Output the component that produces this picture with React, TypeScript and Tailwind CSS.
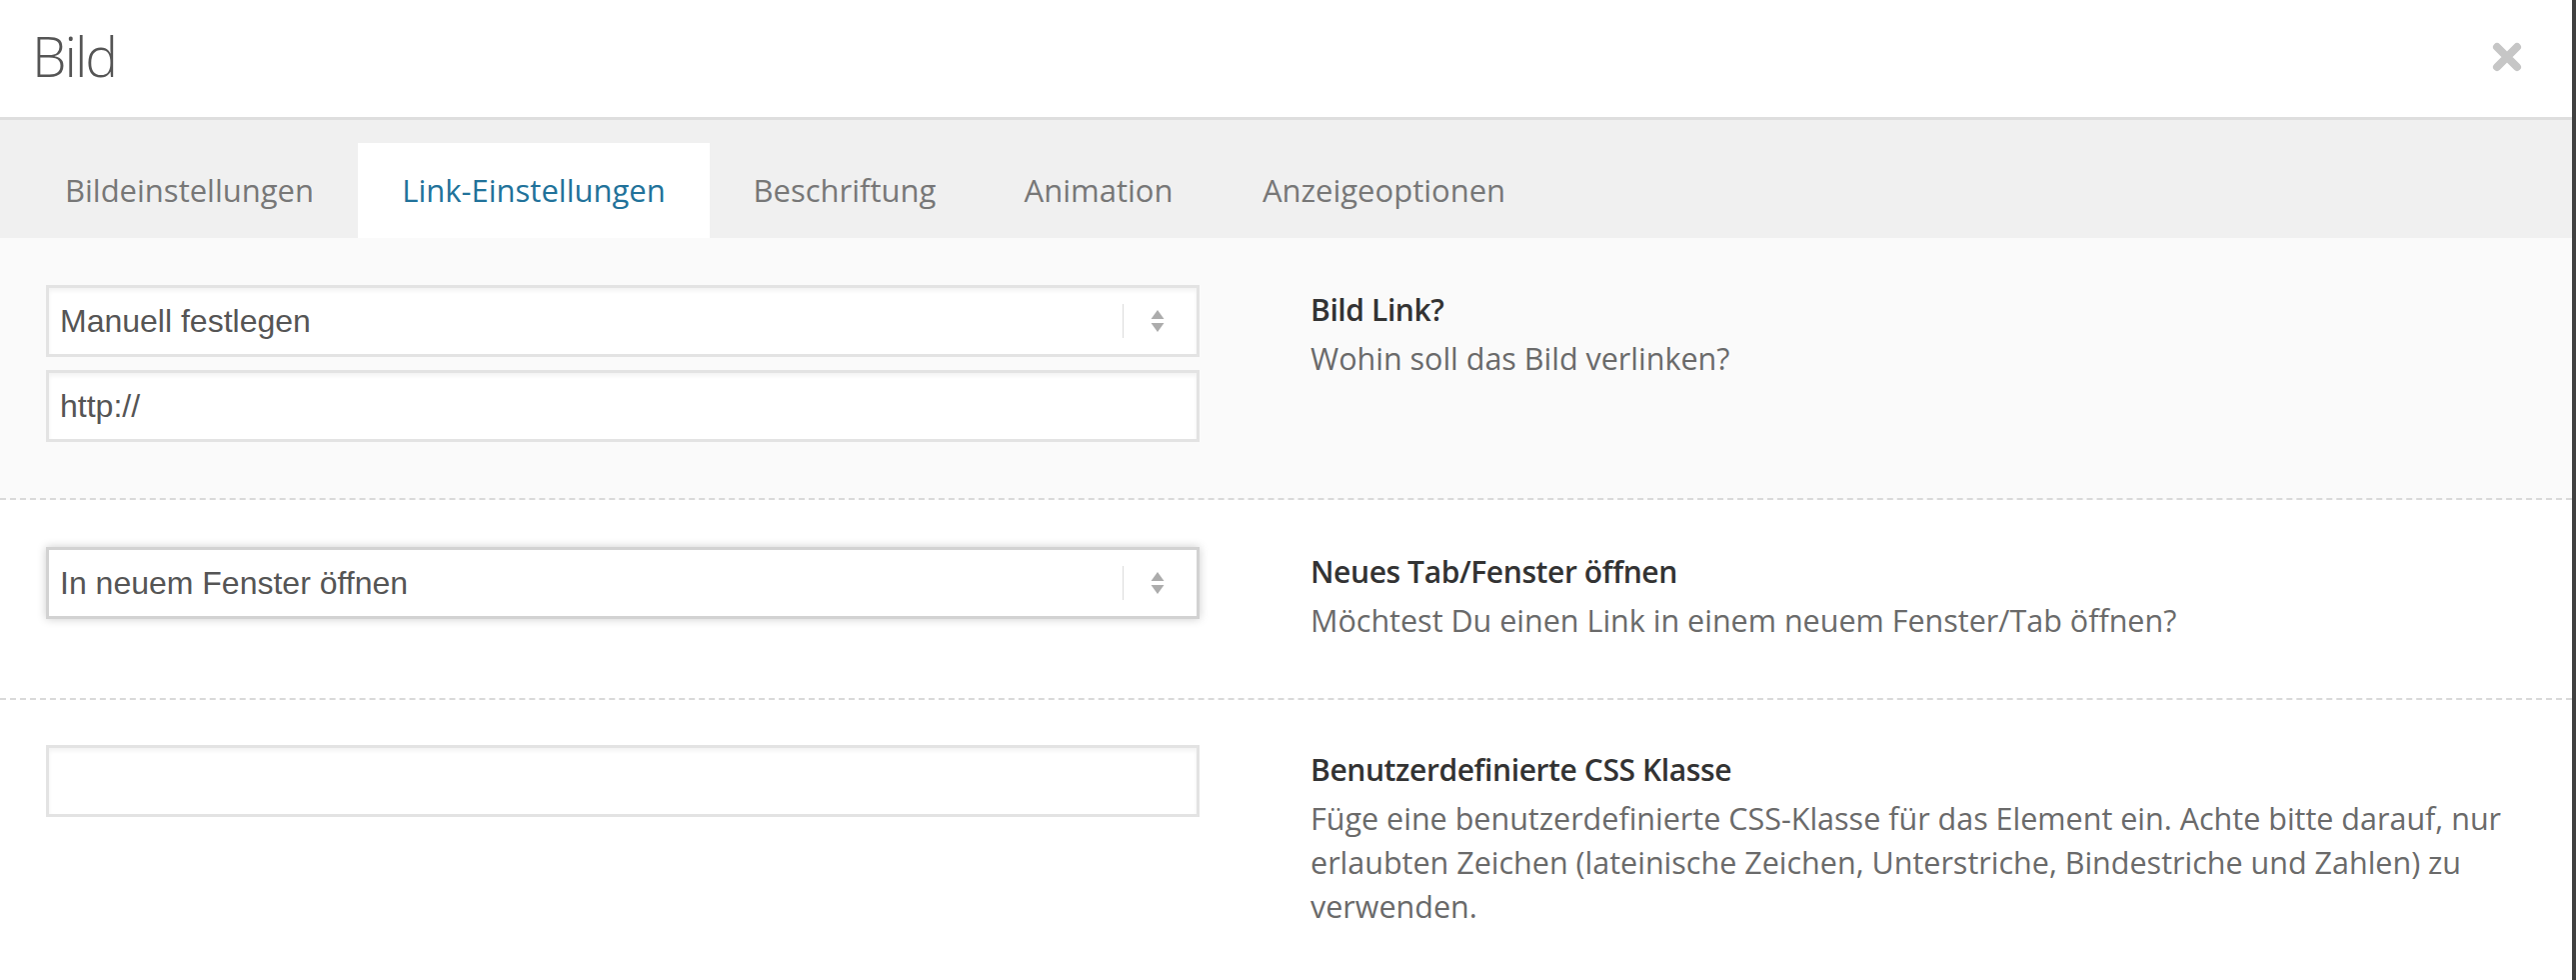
import { useState } from 'react';

const tabs = [
  { label: 'Bildeinstellungen', w: 'w-[337px]' },
  { label: 'Link-Einstellungen', w: 'w-[352px]' },
  { label: 'Beschriftung', w: 'w-[270px]' },
  { label: 'Animation', w: 'w-[238px]' },
  { label: 'Anzeigeoptionen', w: 'w-[333px]' },
];

function Arrows() {
  return (
    <svg width="16" height="26" viewBox="0 0 16 26" className="text-[#acacac]">
      <path d="M8 2 L14.5 11 H1.5 Z" fill="currentColor" />
      <path d="M1.5 15 H14.5 L8 24 Z" fill="currentColor" />
    </svg>
  );
}

function FakeSelect({ value, focused }: { value: string; focused?: boolean }) {
  return (
    <div
      className={`flex h-[72px] w-[1154px] items-center border-[3px] bg-white ${
        focused
          ? 'border-[#d2d2d2] shadow-[0_0_9px_rgba(0,0,0,0.2)]'
          : 'border-[#e3e3e3] shadow-[inset_0_3px_4px_rgba(0,0,0,0.05)]'
      }`}
    >
      <span className="flex-1 pl-[11px] font-['Liberation_Sans',Arial,sans-serif] text-[32px] text-[#555]">{value}</span>
      <span className="h-[34px] w-px bg-[#dcdcdc]" />
      <span className="flex w-[73px] justify-center pr-[5px]">
        <Arrows />
      </span>
    </div>
  );
}

function TextInput({ value }: { value: string }) {
  return (
    <div className="flex h-[72px] w-[1154px] items-center border-[3px] border-[#e3e3e3] bg-white shadow-[inset_0_3px_4px_rgba(0,0,0,0.05)]">
      <span className="pl-[11px] font-['Liberation_Sans',Arial,sans-serif] text-[32px] text-[#555]">{value}</span>
    </div>
  );
}

function Help({ title, lines }: { title: string; lines: string[] }) {
  return (
    <div className="ml-[111px] pt-[3px] font-['Open_Sans','Noto_Sans',sans-serif]">
      <div className="text-[30px] font-semibold leading-[44px] tracking-[-0.4px] text-[#333]">{title}</div>
      <div className="mt-[4px] text-[30.5px] leading-[44px] text-[#6a6a6a]">
        {lines.map((l) => (
          <div key={l} className="whitespace-nowrap">
            {l}
          </div>
        ))}
      </div>
    </div>
  );
}

export default function App() {
  const [active, setActive] = useState(1);

  return (
    <div className="flex min-h-[980px] w-full bg-white">
      <div className="flex-1 font-['Open_Sans','Noto_Sans',sans-serif]">
        {/* Kopfzeile */}
        <div className="flex h-[120px] items-center justify-between border-b-[3px] border-[#dedede] pl-[32px] pr-[50px]">
          <h1 className="-mt-[4px] text-[55px] font-light tracking-[-2px] text-[#555]">Bild</h1>
          <button aria-label="Schließen" className="mt-[-4px]">
            <svg width="30" height="30" viewBox="0 0 30 30">
              <path d="M5 5 L25 25 M25 5 L5 25" stroke="#c6c6c6" strokeWidth="8" strokeLinecap="round" />
            </svg>
          </button>
        </div>

        {/* Tabs */}
        <div className="flex h-[118px] items-end bg-[#f0f0f0] pl-[21px]">
          {tabs.map((t, i) => (
            <button
              key={t.label}
              onClick={() => setActive(i)}
              className={`flex h-[95px] ${t.w} items-center justify-center text-[31px] ${
                i === active ? 'bg-white text-[#21729a]' : 'text-[#777]'
              }`}
            >
              {t.label}
            </button>
          ))}
        </div>

        {/* Bild Link */}
        <section className="flex h-[262px] border-b-2 border-dashed border-[#d9d9d9] bg-[#fafafa] pl-[46px] pt-[47px]">
          <div className="flex flex-col gap-[13px]">
            <FakeSelect value="Manuell festlegen" />
            <TextInput value="http://" />
          </div>
          <Help title="Bild Link?" lines={['Wohin soll das Bild verlinken?']} />
        </section>

        {/* Neues Fenster */}
        <section className="flex h-[200px] border-b-2 border-dashed border-[#d9d9d9] pl-[46px] pt-[47px]">
          <FakeSelect value="In neuem Fenster öffnen" focused />
          <Help title="Neues Tab/Fenster öffnen" lines={['Möchtest Du einen Link in einem neuem Fenster/Tab öffnen?']} />
        </section>

        {/* CSS Klasse */}
        <section className="flex pl-[46px] pt-[45px]">
          <TextInput value="" />
          <Help
            title="Benutzerdefinierte CSS Klasse"
            lines={[
              'Füge eine benutzerdefinierte CSS-Klasse für das Element ein. Achte bitte darauf, nur',
              'erlaubten Zeichen (lateinische Zeichen, Unterstriche, Bindestriche und Zahlen) zu',
              'verwenden.',
            ]}
          />
        </section>
      </div>
      <div className="w-[4px] shrink-0 bg-[#414141]" />
    </div>
  );
}
